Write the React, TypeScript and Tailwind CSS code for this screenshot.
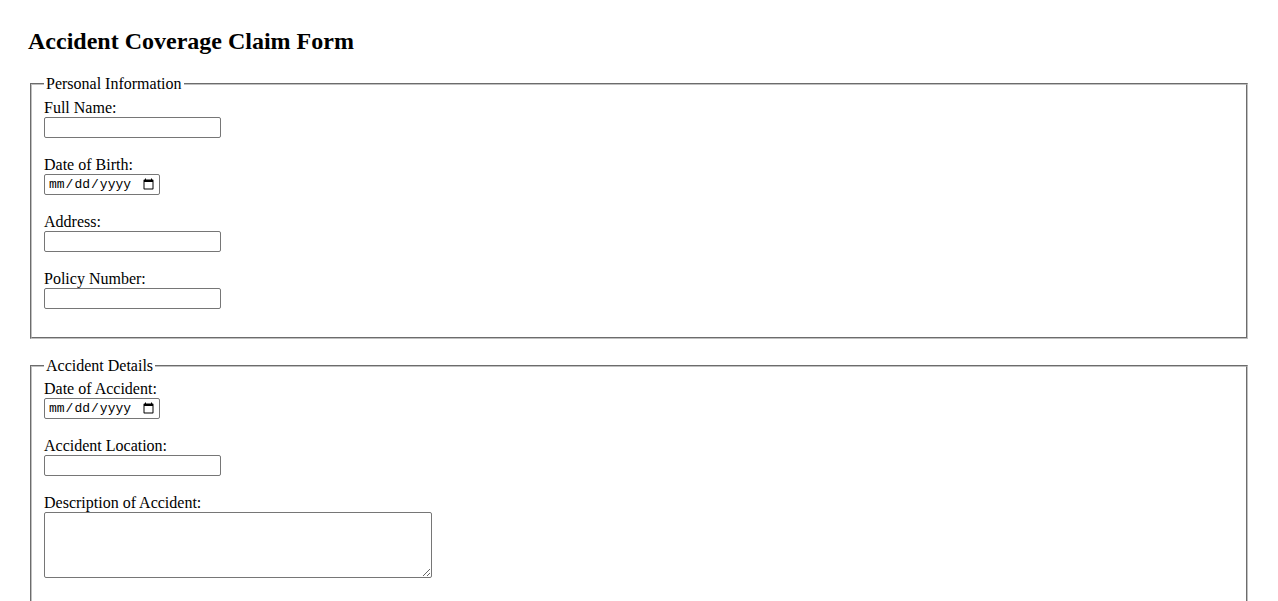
const fieldsetCls =
  "mx-[2px] border-2 border-[#c0c0c0] [border-style:groove] px-[12px] pt-[5.6px] pb-[10px] min-w-0";
const legendCls = "px-[2px]";
const textInput =
  "block w-[177px] h-[21px] border border-[#767676] rounded-[2px] bg-white px-[2px] text-[13.33px] font-['Liberation_Sans',Arial,sans-serif]";
const dateInput =
  "block w-[116px] h-[21px] border border-[#767676] rounded-[2px] bg-white pl-[3px] pr-[2px] text-[13px] font-['Liberation_Mono','DejaVu_Sans_Mono',monospace]";

function Field({ label, children }: { label: string; children: React.ReactNode }) {
  return (
    <div className="mb-[18px]">
      <label className="block">{label}</label>
      {children}
    </div>
  );
}

export default function App() {
  return (
    <div className="min-h-screen bg-white text-black px-[28px] pt-[8px] pb-8 font-['Liberation_Serif','Times_New_Roman',serif] text-[16px] leading-[normal]">
      <h2 className="text-[24px] font-bold my-[20px]">Accident Coverage Claim Form</h2>

      <form>
        <fieldset className={fieldsetCls}>
          <legend className={legendCls}>Personal Information</legend>
          <Field label="Full Name:">
            <input type="text" className={textInput} />
          </Field>
          <Field label="Date of Birth:">
            <input type="date" className={dateInput} />
          </Field>
          <Field label="Address:">
            <input type="text" className={textInput} />
          </Field>
          <Field label="Policy Number:">
            <input type="text" className={textInput} />
          </Field>
        </fieldset>

        <fieldset className={fieldsetCls + " mt-[18px]"}>
          <legend className={legendCls}>Accident Details</legend>
          <Field label="Date of Accident:">
            <input type="date" className={dateInput} />
          </Field>
          <Field label="Accident Location:">
            <input type="text" className={textInput} />
          </Field>
          <Field label="Description of Accident:">
            <textarea className="block w-[388px] h-[66px] border border-[#767676] rounded-[2px] bg-white px-[2px] text-[13px] font-['Liberation_Mono',monospace]" />
          </Field>
        </fieldset>
      </form>
    </div>
  );
}
